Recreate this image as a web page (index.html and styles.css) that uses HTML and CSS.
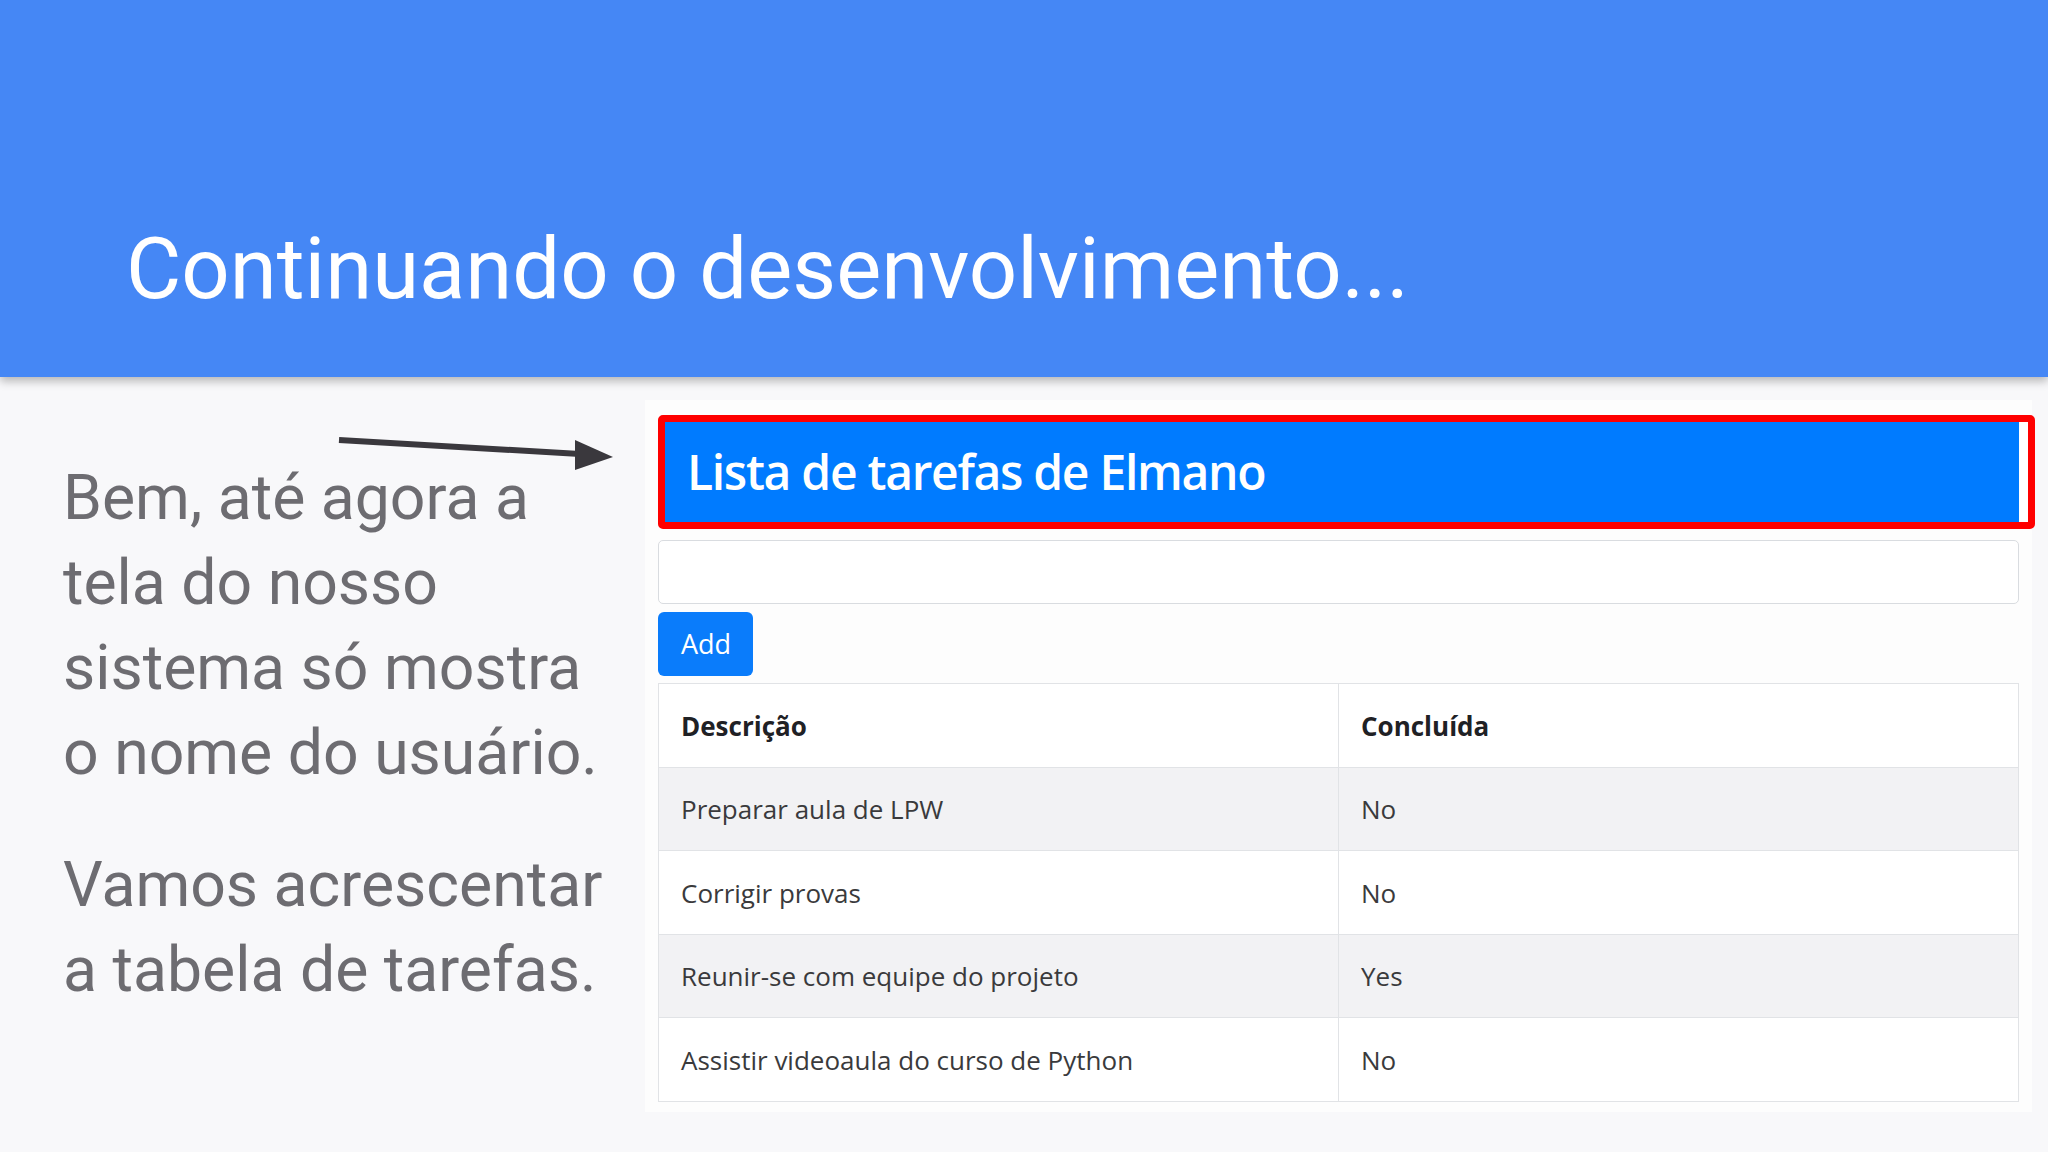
FILE: index.html
```html
<!DOCTYPE html>
<html lang="pt-BR">
<head>
<meta charset="utf-8">
<title>Continuando o desenvolvimento...</title>
<link rel="stylesheet" href="styles.css">
</head>
<body>
<div class="slide">
  <header class="slide-header">
    <h1 class="slide-title">Continuando o desenvolvimento...</h1>
  </header>
  <main class="slide-body">
    <section class="text-col">
      <p class="para">Bem, até agora a<br>tela do nosso<br>sistema só mostra<br>o nome do usuário.</p>
      <p class="para">Vamos acrescentar<br>a tabela de tarefas.</p>
    </section>
    <section class="shot">
      <div class="jumbo-frame">
        <div class="jumbo">Lista de tarefas de Elmano</div>
      </div>
      <div class="text-input"></div>
      <div class="btn-add">Add</div>
      <table class="tasks">
        <thead>
          <tr class="row-h"><th>Descrição</th><th>Concluída</th></tr>
        </thead>
        <tbody>
          <tr class="row-a stripe"><td>Preparar aula de LPW</td><td>No</td></tr>
          <tr class="row-b"><td>Corrigir provas</td><td>No</td></tr>
          <tr class="row-a stripe"><td>Reunir-se com equipe do projeto</td><td>Yes</td></tr>
          <tr class="row-b"><td>Assistir videoaula do curso de Python</td><td>No</td></tr>
        </tbody>
      </table>
    </section>
    <svg class="arrow" width="300" height="50" viewBox="0 0 300 50" xmlns="http://www.w3.org/2000/svg">
      <line x1="9" y1="10" x2="250" y2="24" stroke="#3a383d" stroke-width="6"/>
      <polygon points="245,10 283,27 245,40" fill="#3a383d"/>
    </svg>
  </main>
</div>
</body>
</html>
```
FILE: styles.css
```css
html, body {
  margin: 0;
  padding: 0;
}
body {
  background: #f8f8fa;
  width: 2048px;
  height: 1152px;
  overflow: hidden;
}
.slide {
  width: 2048px;
  height: 1152px;
  display: flex;
  flex-direction: column;
  background: #f8f8fa;
}
.slide-header {
  height: 377px;
  box-sizing: border-box;
  background: #4587f5;
  padding: 226px 0 0 126px;
  box-shadow: 0 4px 9px rgba(0, 0, 0, 0.28);
  position: relative;
  z-index: 2;
}
.slide-title {
  margin: 0;
  font-family: Roboto, "Liberation Sans", sans-serif;
  font-weight: 400;
  font-size: 85px;
  line-height: 86px;
  color: #ffffff;
  white-space: nowrap;
}
.slide-body {
  display: flex;
  position: relative;
  flex: 1;
}
.text-col {
  flex: 0 0 645px;
  box-sizing: border-box;
  padding: 78px 0 0 63px;
}
.para {
  margin: 0 0 47px 0;
  font-family: Roboto, "Liberation Sans", sans-serif;
  font-size: 62.5px;
  line-height: 85px;
  color: #6d6c71;
  white-space: nowrap;
}
.shot {
  margin-top: 23px;
  width: 1387px;
  height: 712px;
  box-sizing: border-box;
  padding: 15px 13px 11px 13px;
  background: #fdfdfd;
  font-family: "Open Sans", "Noto Sans", sans-serif;
}
.jumbo-frame {
  border: 7px solid #ff0000;
  border-radius: 5px;
  margin-right: -16px;
  background: #ffffff;
}
.jumbo {
  height: 100px;
  margin-right: 9px;
  box-sizing: border-box;
  padding-left: 22px;
  background: #007bff;
  color: #ffffff;
  font-size: 48px;
  font-weight: 600;
  letter-spacing: -1.3px;
  line-height: 100px;
  white-space: nowrap;
}
.text-input {
  margin-top: 11px;
  height: 64px;
  box-sizing: border-box;
  border: 1px solid #d9dce0;
  border-radius: 5px;
  background: #ffffff;
}
.btn-add {
  margin-top: 8px;
  width: 95px;
  height: 64px;
  box-sizing: border-box;
  padding-left: 23px;
  border-radius: 6px;
  background: #0a7cfb;
  color: #ffffff;
  font-size: 27px;
  line-height: 64px;
}
.tasks {
  margin-top: 7px;
  width: 100%;
  border-collapse: collapse;
  table-layout: fixed;
  background: #ffffff;
  font-size: 26px;
}
.tasks th,
.tasks td {
  border: 1px solid #e1e3e6;
  padding: 0 0 0 22px;
  text-align: left;
  vertical-align: middle;
  white-space: nowrap;
}
.tasks th {
  font-weight: 700;
  color: #1f2125;
}
.tasks td {
  color: #3a3a3c;
}
.row-h { height: 84px; }
.row-a { height: 83px; }
.row-b { height: 84px; }
.stripe td { background: #f2f2f4; }
.arrow {
  position: absolute;
  left: 330px;
  top: 53px;
}
```
